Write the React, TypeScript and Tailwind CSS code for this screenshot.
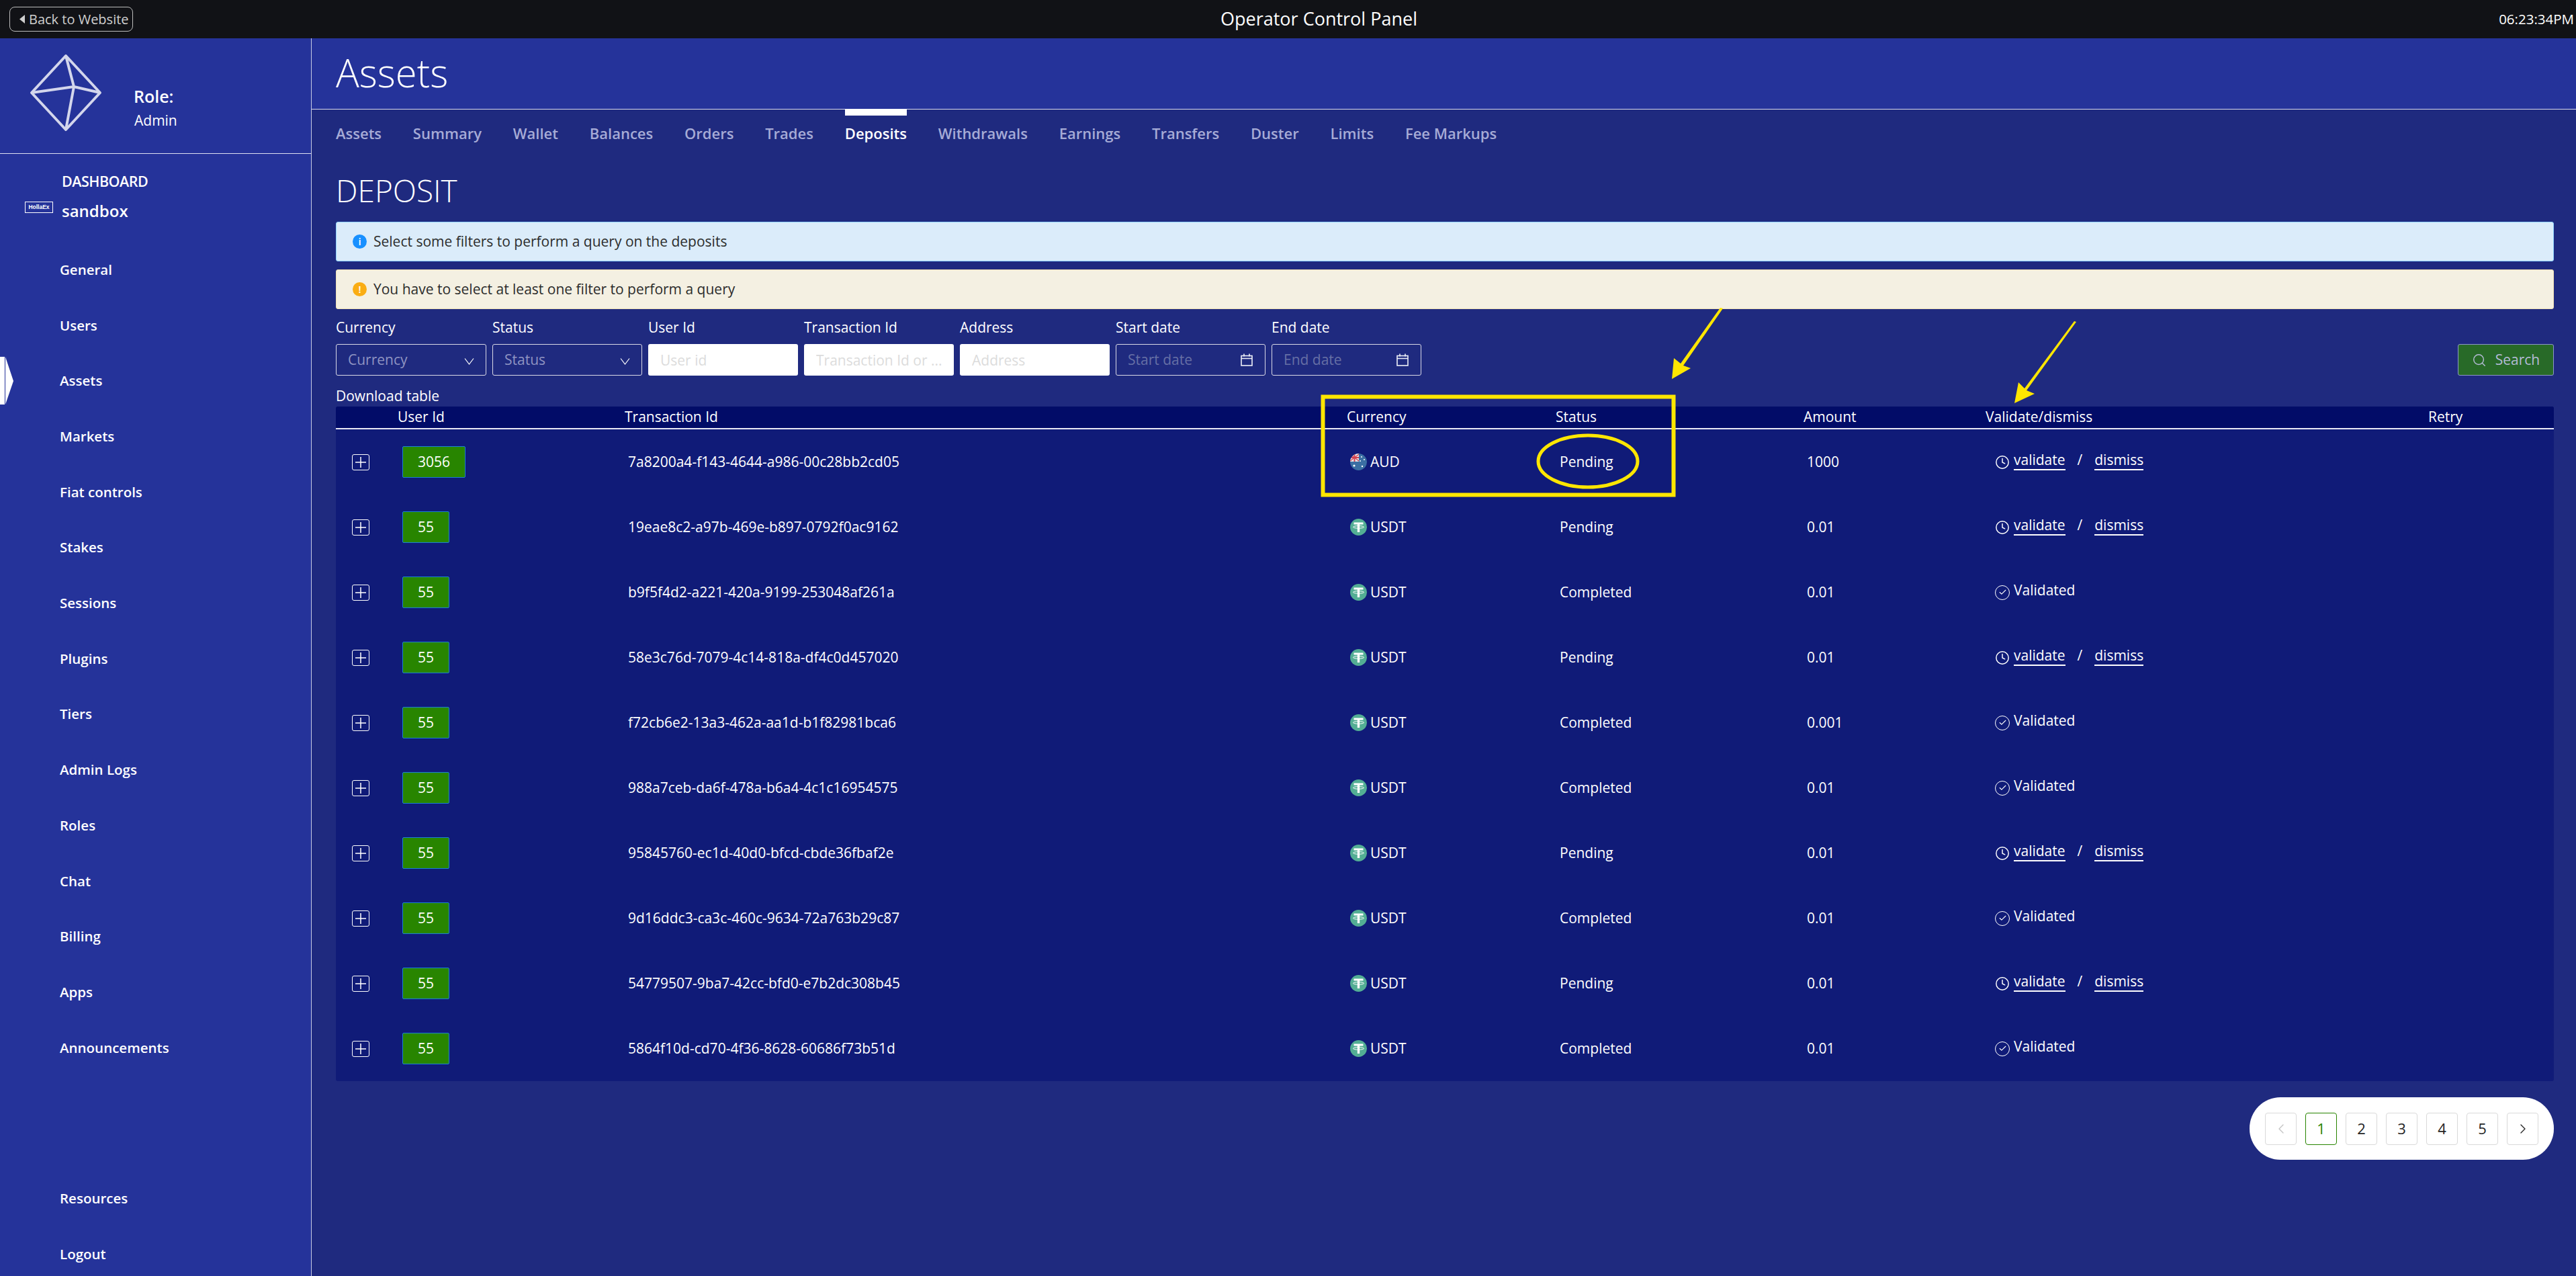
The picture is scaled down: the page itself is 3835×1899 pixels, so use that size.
import { useState } from "react";
import { Check, ChevronLeft, ChevronRight, Clock, Search } from "lucide-react";

const NAV = [
  "General",
  "Users",
  "Assets",
  "Markets",
  "Fiat controls",
  "Stakes",
  "Sessions",
  "Plugins",
  "Tiers",
  "Admin Logs",
  "Roles",
  "Chat",
  "Billing",
  "Apps",
  "Announcements",
];

const TABS = [
  "Assets",
  "Summary",
  "Wallet",
  "Balances",
  "Orders",
  "Trades",
  "Deposits",
  "Withdrawals",
  "Earnings",
  "Transfers",
  "Duster",
  "Limits",
  "Fee Markups",
];

type Row = {
  user: string;
  tx: string;
  coin: string;
  status: "Pending" | "Completed";
  amount: string;
};

const ROWS: Row[] = [
  { user: "3056", tx: "7a8200a4-f143-4644-a986-00c28bb2cd05", coin: "AUD", status: "Pending", amount: "1000" },
  { user: "55", tx: "19eae8c2-a97b-469e-b897-0792f0ac9162", coin: "USDT", status: "Pending", amount: "0.01" },
  { user: "55", tx: "b9f5f4d2-a221-420a-9199-253048af261a", coin: "USDT", status: "Completed", amount: "0.01" },
  { user: "55", tx: "58e3c76d-7079-4c14-818a-df4c0d457020", coin: "USDT", status: "Pending", amount: "0.01" },
  { user: "55", tx: "f72cb6e2-13a3-462a-aa1d-b1f82981bca6", coin: "USDT", status: "Completed", amount: "0.001" },
  { user: "55", tx: "988a7ceb-da6f-478a-b6a4-4c1c16954575", coin: "USDT", status: "Completed", amount: "0.01" },
  { user: "55", tx: "95845760-ec1d-40d0-bfcd-cbde36fbaf2e", coin: "USDT", status: "Pending", amount: "0.01" },
  { user: "55", tx: "9d16ddc3-ca3c-460c-9634-72a763b29c87", coin: "USDT", status: "Completed", amount: "0.01" },
  { user: "55", tx: "54779507-9ba7-42cc-bfd0-e7b2dc308b45", coin: "USDT", status: "Pending", amount: "0.01" },
  { user: "55", tx: "5864f10d-cd70-4f36-8628-60686f73b51d", coin: "USDT", status: "Completed", amount: "0.01" },
];

const COLS = "grid grid-cols-[92px_338px_1075px_311px_369px_271px_659px_187px]";

function Diamond() {
  return (
    <svg width="110" height="118" viewBox="44 79 110 118" fill="none" stroke="#d3d6ec" strokeWidth="4" strokeLinejoin="round" className="mb-[10px]">
      <path d="M99 83 L150 138 L99 193 L48 138 Z" />
      <path d="M99 83 L111 129 L99 193 M48 138 L111 129 L150 138" />
    </svg>
  );
}

function AudIcon() {
  return (
    <svg width="25" height="25" viewBox="0 0 25 25" className="shrink-0">
      <clipPath id="aud-clip">
        <circle cx="12.5" cy="12.5" r="12.5" />
      </clipPath>
      <g clipPath="url(#aud-clip)">
        <rect width="25" height="25" fill="#3b6fa3" />
        <rect width="13" height="12" fill="#e8e2e6" />
        <path d="M0 5 H13 V7 H0 Z M5.5 0 H7.5 V12 H5.5 Z" fill="#d2404f" />
        <path d="M0 1 L13 11 M13 1 L0 11" stroke="#d2404f" strokeWidth="1.2" />
        <circle cx="6" cy="18" r="1.6" fill="#fff" />
        <circle cx="17" cy="5" r="1" fill="#fff" />
        <circle cx="21" cy="9" r="1" fill="#fff" />
        <circle cx="15" cy="11" r="1" fill="#fff" />
        <circle cx="18" cy="19" r="1.2" fill="#fff" />
      </g>
    </svg>
  );
}

function UsdtIcon() {
  return (
    <svg width="25" height="25" viewBox="0 0 25 25" className="shrink-0">
      <circle cx="12.5" cy="12.5" r="12.5" fill="#53ae94" />
      <path d="M5.5 5.5 H19.5 V8.6 H14.2 V20 H10.8 V8.6 H5.5 Z" fill="#fff" />
      <ellipse cx="12.5" cy="12.4" rx="8" ry="1.8" fill="none" stroke="#fff" strokeWidth="1" />
    </svg>
  );
}

function CalendarIcon() {
  return (
    <svg width="18" height="19" viewBox="0 0 18 19" fill="none" stroke="#eef0f8" strokeWidth="1.6" className="shrink-0">
      <rect x="1" y="3.5" width="16" height="14.5" />
      <path d="M1 7.5 H17 M5 0.5 V4.5 M13 0.5 V4.5" />
    </svg>
  );
}

function Field({ label, wide, children }: { label: string; wide?: boolean; children: React.ReactNode }) {
  return (
    <div className={wide ? "flex w-[224px] flex-col" : "flex w-[223px] flex-col"}>
      <label className="h-[31px] text-[21px] leading-[31px] text-white">{label}</label>
      <div className="mt-[9px] h-[47px]">{children}</div>
    </div>
  );
}

function SelectBox({ placeholder }: { placeholder: string }) {
  return (
    <div className="flex h-full items-center justify-between rounded-[3px] border border-[#d9d9e6] pl-[17px] pr-[17px] text-[21px] text-[#8f94c2]">
      <span>{placeholder}</span>
      <svg width="15" height="10" viewBox="0 0 15 10" fill="none" stroke="#fff" strokeWidth="1.2" className="mt-[5px]">
        <path d="M1 0.5 L7.5 9 L14 0.5" />
      </svg>
    </div>
  );
}

function TextBox({ placeholder }: { placeholder: string }) {
  return (
    <input
      placeholder={placeholder}
      className="h-full w-full rounded-[3px] bg-white px-[18px] text-[21px] outline-none placeholder:text-[#dcdcdc]"
    />
  );
}

function DateBox({ placeholder }: { placeholder: string }) {
  return (
    <div className="flex h-full items-center justify-between rounded-[3px] border border-[#d9d9e6] pl-[17px] pr-[18px] text-[21px] text-[#666fa5]">
      <span>{placeholder}</span>
      <CalendarIcon />
    </div>
  );
}

function Sidebar() {
  return (
    <aside className="flex w-[464px] shrink-0 flex-col border-r border-[#c9cce4] bg-[#25339a] text-white">
      <div className="flex h-[172px] shrink-0 items-center border-b border-[#dfe1f1] pl-[43px]">
        <Diamond />
        <div className="ml-[46px] mt-[34px]">
          <div className="text-[25px] font-semibold leading-[36px]">Role:</div>
          <div className="mt-[3px] pl-[1px] text-[21px] leading-[30px]">Admin</div>
        </div>
      </div>
      <div className="flex h-[131px] shrink-0 items-center pl-[37px]">
        <div className="mt-[28px] flex h-[17px] w-[42px] items-center justify-center border border-white font-['Liberation_Sans',sans-serif] text-[8.5px] font-bold">
          HollaEx
        </div>
        <div className="ml-[13px] mt-[-5px]">
          <div className="text-[21.5px] font-semibold leading-[36px] tracking-[-0.5px]">DASHBOARD</div>
          <div className="mt-[8px] text-[24px] font-semibold leading-[36px]">sandbox</div>
        </div>
      </div>
      <nav className="flex flex-col">
        {NAV.map((item) => (
          <div key={item} className="relative flex h-[82.7px] items-center pl-[89px] text-[20.5px] font-semibold">
            {item === "Assets" && (
              <div className="absolute left-0 top-[6px] flex h-[71px]">
                <div className="w-[7px] bg-white" />
                <svg width="13" height="71" viewBox="0 0 13 71" className="ml-px">
                  <path d="M0 0 L12 36 L0 71 Z" fill="#fff" />
                </svg>
              </div>
            )}
            {item}
          </div>
        ))}
      </nav>
      <div className="mt-[142px] flex flex-col">
        {["Resources", "Logout"].map((item) => (
          <div key={item} className="flex h-[82.7px] items-center pl-[89px] text-[20.5px] font-semibold">
            {item}
          </div>
        ))}
      </div>
    </aside>
  );
}

function DepositRow({ row }: { row: Row }) {
  return (
    <div className={`${COLS} h-[97px] items-center text-[21px] text-white`}>
      <div className="pl-[24px]">
        <button className="flex h-[24px] w-[26px] items-center justify-center rounded-[3px] border border-white">
          <svg width="16" height="16" viewBox="0 0 16 16" stroke="#fff" strokeWidth="1.5">
            <path d="M0 8 H16 M8 0 V16" />
          </svg>
        </button>
      </div>
      <div className="pl-[7px]">
        <button className="h-[47px] rounded-[2px] border border-[#1c7fd6] bg-[#288500] px-[22px] text-[21px]">{row.user}</button>
      </div>
      <div className="pl-[5px]">{row.tx}</div>
      <div className="flex items-center gap-[5px] pl-[5px]">
        {row.coin === "AUD" ? <AudIcon /> : <UsdtIcon />}
        {row.coin}
      </div>
      <div className="pl-[6px]">{row.status}</div>
      <div className="pl-[5px]">{row.amount}</div>
      <div className="flex items-center pl-[14px]">
        {row.status === "Pending" ? (
          <>
            <Clock size={22} strokeWidth={1.6} />
            <a className="ml-[6px] mt-[-6px] border-b-2 border-white leading-[28px]">validate</a>
            <span className="mx-[18px] mt-[-6px]">/</span>
            <a className="mt-[-6px] border-b-2 border-white leading-[28px]">dismiss</a>
          </>
        ) : (
          <>
            <span className="flex h-[22px] w-[22px] items-center justify-center rounded-full border-[1.6px] border-white">
              <Check size={13} strokeWidth={2} />
            </span>
            <span className="ml-[6px] mt-[-6px]">Validated</span>
          </>
        )}
      </div>
      <div />
    </div>
  );
}

function Pagination() {
  const [page, setPage] = useState(1);
  return (
    <div className="mt-[24px] flex justify-end">
      <div className="flex h-[93px] items-center gap-[13px] rounded-[46px] bg-white px-[23px] text-[22px] text-[#262626]">
        <button className="flex h-[48px] w-[47px] items-center justify-center rounded-[4px] border border-[#d9d9d9] text-[#c4c4c4]">
          <ChevronLeft size={24} strokeWidth={1.4} />
        </button>
        {[1, 2, 3, 4, 5].map((n) => (
          <button
            key={n}
            onClick={() => setPage(n)}
            className={
              n === page
                ? "flex h-[48px] w-[47px] items-center justify-center rounded-[4px] border border-[#288500] text-[#288500]"
                : "flex h-[48px] w-[47px] items-center justify-center rounded-[4px] border border-[#d9d9d9]"
            }
          >
            {n}
          </button>
        ))}
        <button className="flex h-[48px] w-[47px] items-center justify-center rounded-[4px] border border-[#d9d9d9]">
          <ChevronRight size={24} strokeWidth={1.4} />
        </button>
      </div>
    </div>
  );
}

// yellow marks drawn on top of the screenshot
function Annotations() {
  return (
    <svg viewBox="0 0 3835 1899" className="pointer-events-none absolute inset-0 h-full w-full" fill="none">
      <rect x="1969.5" y="590.5" width="522" height="146" stroke="#ffe600" strokeWidth="6" />
      <ellipse cx="2364" cy="686.5" rx="74" ry="38.5" stroke="#ffe600" strokeWidth="5" />
      <path d="M2561 458 L2565 459 L2506 544 L2517 548 L2489 564 L2492 533 L2502 541 Z" fill="#ffe600" />
      <path d="M3088 478 L3091 479 L3017 581 L3029 586 L2999 600 L3005 569 L3014 578 Z" fill="#ffe600" />
    </svg>
  );
}

export default function App() {
  return (
    <div className="relative flex h-screen w-full flex-col overflow-hidden bg-[#1f2a7f] font-['Open_Sans',sans-serif]">
      <header className="relative flex h-[57px] shrink-0 items-center justify-between bg-[#111216] pl-[14px] pr-[3px] text-white">
        <button className="flex h-[37px] w-[184px] items-center rounded-[8px] border border-[#bdbdbd] pl-[14px] text-[20px] text-[#cfcfcf]">
          <svg width="9" height="13" viewBox="0 0 9 13" className="mr-[5px]">
            <path d="M8 0 V13 L0 6.5 Z" fill="#cfcfcf" />
          </svg>
          Back to Website
        </button>
        <div className="absolute left-[1817px] text-[27px]">Operator Control Panel</div>
        <div className="text-[20.5px]">06:23:34PM</div>
      </header>
      <div className="flex min-h-0 flex-1">
        <Sidebar />
        <main className="flex min-w-0 flex-1 flex-col">
          <div className="flex h-[106px] shrink-0 items-center border-b border-[#d9dbec] bg-[#25339a] pb-[4px] pl-[36px] text-[58px] font-light text-white">
            Assets
          </div>
          <div className="flex flex-col pl-[36px] pr-[33px]">
            <div className="mt-[-1px] flex h-[75px] gap-[46.8px] text-[22px] font-semibold text-[#a6abd6]">
              {TABS.map((tab) => (
                <div
                  key={tab}
                  className={
                    tab === "Deposits"
                      ? "border-t-[10px] border-white pt-[10px] text-white"
                      : "border-t-[10px] border-transparent pt-[10px]"
                  }
                >
                  {tab}
                </div>
              ))}
            </div>
            <h1 className="mt-[18px] text-[46px] font-light leading-[57px] text-white">DEPOSIT</h1>
            <div className="mt-[18px] flex h-[59px] items-center gap-[10px] rounded-[3px] border border-[#91d5ff] bg-[#dbecfa] pl-[24px] text-[21px] text-[#2c2c2c]">
              <span className="flex h-[21px] w-[21px] items-center justify-center rounded-full bg-[#1890ff] text-[15px] font-semibold leading-none text-white">i</span>
              Select some filters to perform a query on the deposits
            </div>
            <div className="mt-[12px] flex h-[59px] items-center gap-[10px] rounded-[3px] border border-[#f2e4b6] bg-[#f4f0e2] pl-[24px] text-[21px] text-[#2c2c2c]">
              <span className="flex h-[21px] w-[21px] items-center justify-center rounded-full bg-[#faad14] text-[15px] font-semibold leading-none text-white">!</span>
              You have to select at least one filter to perform a query
            </div>
            <div className="mt-[12px] flex items-end gap-[9px]">
              <Field label="Currency" wide><SelectBox placeholder="Currency" /></Field>
              <Field label="Status"><SelectBox placeholder="Status" /></Field>
              <Field label="User Id"><TextBox placeholder="User id" /></Field>
              <Field label="Transaction Id"><TextBox placeholder="Transaction Id or ..." /></Field>
              <Field label="Address"><TextBox placeholder="Address" /></Field>
              <Field label="Start date"><DateBox placeholder="Start date" /></Field>
              <Field label="End date"><DateBox placeholder="End date" /></Field>
              <button className="ml-auto flex h-[47px] w-[143px] items-center justify-center gap-[13px] rounded-[3px] border border-[#8d96c8] bg-[#286a28] text-[21px] text-[#b4bbd6]">
                <Search size={22} strokeWidth={1.6} />
                Search
              </button>
            </div>
            <div className="mt-[15px] h-[31px] text-[21px] leading-[31px] text-white">Download table</div>
            <div className="overflow-hidden rounded-[3px] bg-[#101b78]">
              <div className={`${COLS} h-[34px] items-center border-b-2 border-[#e8e8f4] bg-[#020c68] text-[21px] text-white`}>
                <div />
                <div>User Id</div>
                <div>Transaction Id</div>
                <div>Currency</div>
                <div>Status</div>
                <div>Amount</div>
                <div>Validate/dismiss</div>
                <div>Retry</div>
              </div>
              {ROWS.map((row) => (
                <DepositRow key={row.tx} row={row} />
              ))}
            </div>
            <Pagination />
          </div>
        </main>
      </div>
      <Annotations />
    </div>
  );
}
